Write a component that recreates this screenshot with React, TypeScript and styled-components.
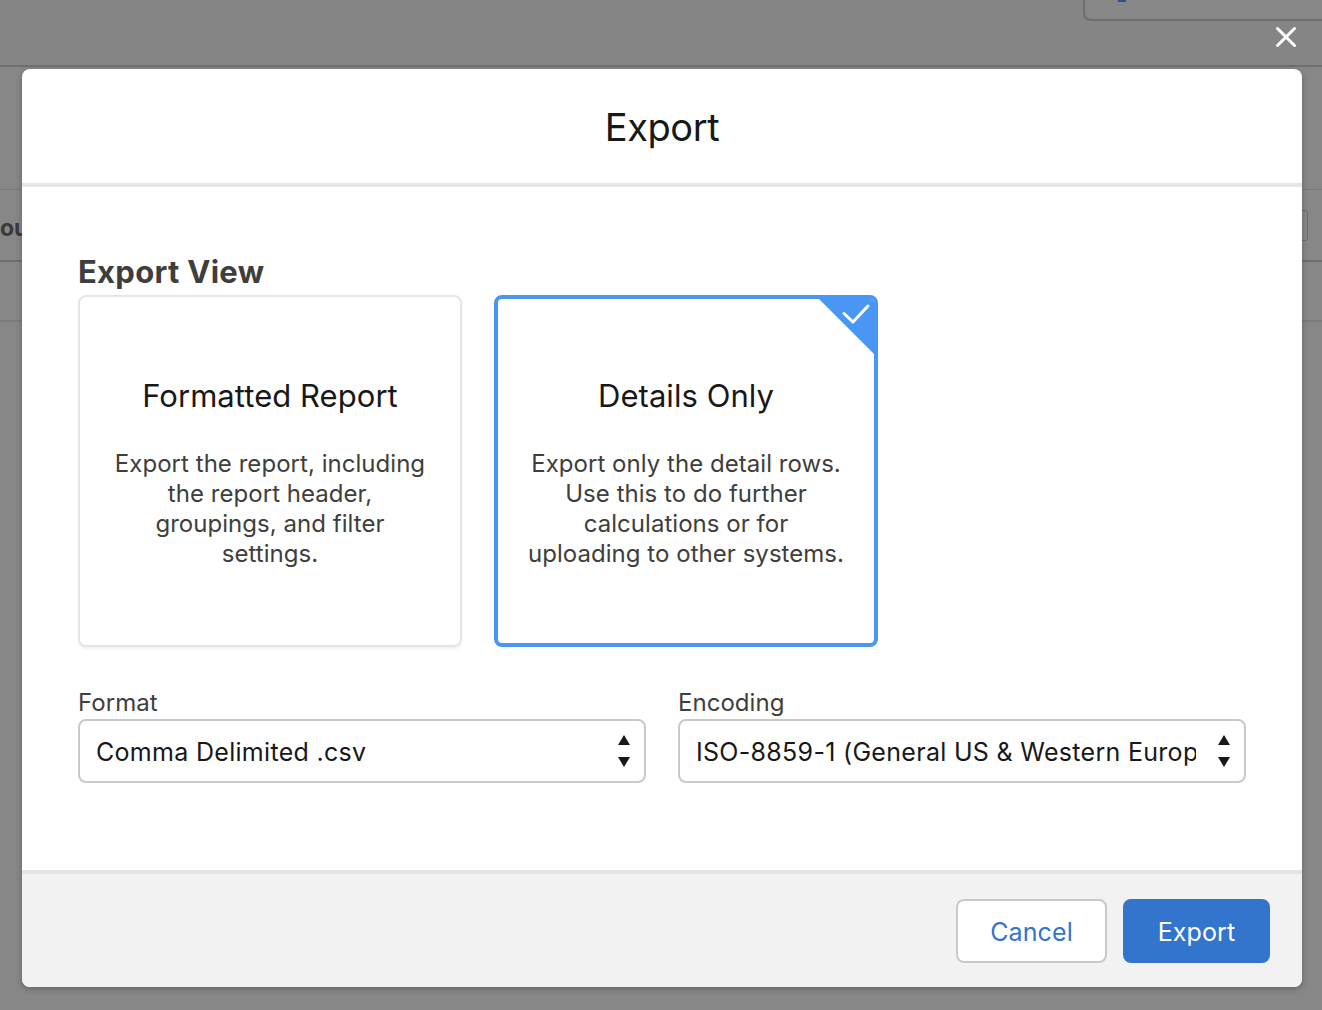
import React from 'react';
import styled, { createGlobalStyle } from 'styled-components';

const GlobalStyle = createGlobalStyle`
  html, body {
    margin: 0;
    padding: 0;
    height: 100%;
    overflow: hidden;
    background: #878787;
    font-family: Inter, "Liberation Sans", sans-serif;
  }
`;

const Page = styled.div`
  position: relative;
  width: 1322px;
  height: 1010px;
  overflow: hidden;
  background: #878787;
`;

const TopBar = styled.div`
  display: flex;
  justify-content: flex-end;
  align-items: flex-start;
  height: 65px;
  background: #858585;
  border-bottom: 2px solid #6f6f6f;
`;

const TopBarBox = styled.div`
  box-sizing: border-box;
  width: 239px;
  height: 21px;
  padding-left: 33px;
  border-left: 2px solid #6e6e6e;
  border-bottom: 2px solid #6e6e6e;
  border-radius: 0 0 0 8px;
  background: #878787;
`;

const TopBarMark = styled.div`
  width: 8px;
  height: 2px;
  background: #2b4f8c;
`;

const ReportHead = styled.div`
  display: flex;
  align-items: center;
  justify-content: space-between;
  height: 70px;
  margin-top: 122px;
  border-top: 1px solid #7b7b7b;
  border-bottom: 2px solid #6c6f78;
  font-size: 23px;
  font-weight: 700;
  color: #3a3a3a;
`;

const ReportHeadText = styled.span`
  padding-top: 5px;
`;

const ReportHeadBox = styled.div`
  box-sizing: border-box;
  width: 40px;
  height: 31px;
  margin-right: 14px;
  border: 1px solid #6e6e6e;
  border-radius: 3px;
`;

const ReportRow = styled.div`
  height: 58px;
  border-bottom: 2px solid #7b7b7b;
`;

const CloseButton = styled.button`
  position: absolute;
  top: 25px;
  right: 24px;
  width: 24px;
  height: 24px;
  padding: 0;
  border: 0;
  background: none;
  color: #ffffff;
  svg { display: block; }
`;

const Modal = styled.div`
  position: absolute;
  top: 69px;
  left: 22px;
  display: flex;
  flex-direction: column;
  width: 1280px;
  height: 918px;
  border-radius: 8px;
  overflow: hidden;
  background: #ffffff;
  box-shadow: 0 2px 6px rgba(0, 0, 0, 0.25);
`;

const ModalHeader = styled.header`
  display: flex;
  align-items: center;
  justify-content: center;
  flex: none;
  height: 112px;
  padding-top: 2px;
  border-bottom: 4px solid #e5e5e5;
`;

const ModalTitle = styled.h1`
  margin: 0;
  font-size: 38px;
  font-weight: 400;
  letter-spacing: -0.4px;
  color: #181818;
`;

const ModalBody = styled.main`
  flex: 1;
  padding: 64px 56px 0;
`;

const SectionTitle = styled.h2`
  margin: 0;
  height: 44px;
  font-size: 31px;
  line-height: 42px;
  font-weight: 700;
  letter-spacing: 0.28px;
  color: #3e3e3c;
`;

const CardRow = styled.div`
  display: flex;
  gap: 32px;
`;

const Card = styled.div<{ $selected?: boolean }>`
  position: relative;
  box-sizing: border-box;
  width: 384px;
  height: 352px;
  padding: ${(p) => (p.$selected ? '77px 28px 0' : '79px 30px 0')};
  border-radius: 8px;
  overflow: hidden;
  text-align: center;
  border: ${(p) => (p.$selected ? '4px solid #4a96f5' : '2px solid #e5e5e5')};
  box-shadow: ${(p) => (p.$selected ? 'none' : '0 2px 3px rgba(0, 0, 0, 0.06)')};
`;

const CardTitle = styled.h3`
  margin: 0;
  font-size: 31px;
  line-height: 40px;
  font-weight: 400;
  letter-spacing: 0.05px;
  color: #181818;
`;

const CardText = styled.p`
  margin: 33px 0 0;
  font-size: 24px;
  line-height: 30px;
  letter-spacing: 0.04px;
  color: #3e3e3c;
`;

const CornerMark = styled.svg`
  position: absolute;
  top: -4px;
  right: -4px;
  display: block;
`;

const FieldRow = styled.div`
  display: grid;
  grid-template-columns: 568px 568px;
  gap: 32px;
  margin-top: 40px;
`;

const Field = styled.label`
  display: flex;
  flex-direction: column;
`;

const FieldLabel = styled.span`
  height: 32px;
  font-size: 24px;
  line-height: 32px;
  letter-spacing: 0.04px;
  color: #3e3e3c;
`;

const SelectWrap = styled.div`
  position: relative;
`;

const Select = styled.select`
  display: block;
  box-sizing: border-box;
  width: 100%;
  height: 64px;
  padding: 2px 48px 0 16px;
  border: 2px solid #c9c9c9;
  border-radius: 8px;
  background: #ffffff;
  appearance: none;
  font-family: inherit;
  font-size: 25px;
  letter-spacing: 0.3px;
  color: #181818;
`;

const SelectArrows = styled.svg`
  position: absolute;
  top: 15px;
  right: 15px;
  display: block;
  pointer-events: none;
`;

const ModalFooter = styled.footer`
  display: flex;
  align-items: center;
  justify-content: flex-end;
  gap: 16px;
  flex: none;
  box-sizing: border-box;
  height: 117px;
  padding: 25px 32px 24px;
  border-top: 4px solid #e5e5e5;
  background: #f2f2f2;
`;

const Button = styled.button<{ $primary?: boolean }>`
  box-sizing: border-box;
  width: ${(p) => (p.$primary ? '147px' : '151px')};
  height: 64px;
  padding: 2px 0 0;
  border-radius: 8px;
  font-family: inherit;
  font-size: 25px;
  letter-spacing: 0.12px;
  border: 2px solid ${(p) => (p.$primary ? '#3374cc' : '#c9c9c9')};
  background: ${(p) => (p.$primary ? '#3374cc' : '#ffffff')};
  color: ${(p) => (p.$primary ? '#ffffff' : '#3374cc')};
`;

const Arrows = () => (
  <SelectArrows width="14" height="34" viewBox="0 0 14 34" fill="#181818">
    <path d="M7 1 13 11H1Z" />
    <path d="M1 23H13L7 33Z" />
  </SelectArrows>
);

export default function App() {
  return (
    <Page>
      <GlobalStyle />
      <TopBar>
        <TopBarBox>
          <TopBarMark />
        </TopBarBox>
      </TopBar>
      <ReportHead>
        <ReportHeadText>ou</ReportHeadText>
        <ReportHeadBox />
      </ReportHead>
      <ReportRow />

      <CloseButton aria-label="Close">
        <svg width="24" height="24" viewBox="0 0 24 24" fill="none" stroke="currentColor" strokeWidth="3" strokeLinecap="round">
          <path d="M3.5 3.5 20.5 20.5M20.5 3.5 3.5 20.5" />
        </svg>
      </CloseButton>

      <Modal>
        <ModalHeader>
          <ModalTitle>Export</ModalTitle>
        </ModalHeader>
        <ModalBody>
          <SectionTitle>Export View</SectionTitle>
          <CardRow>
            <Card>
              <CardTitle>Formatted Report</CardTitle>
              <CardText>Export the report, including the report header, groupings, and filter settings.</CardText>
            </Card>
            <Card $selected>
              <CornerMark width="63" height="63" viewBox="0 0 63 63">
                <path d="M0 0H63V63Z" fill="#4a96f5" />
                <path d="M29 18.5 38 27 53 11" fill="none" stroke="#ffffff" strokeWidth="3" strokeLinecap="round" strokeLinejoin="round" />
              </CornerMark>
              <CardTitle>Details Only</CardTitle>
              <CardText>Export only the detail rows. Use this to do further calculations or for uploading to other systems.</CardText>
            </Card>
          </CardRow>
          <FieldRow>
            <Field>
              <FieldLabel>Format</FieldLabel>
              <SelectWrap>
                <Select defaultValue="csv">
                  <option value="csv">Comma Delimited .csv</option>
                  <option value="xlsx">Excel Format .xlsx</option>
                </Select>
                <Arrows />
              </SelectWrap>
            </Field>
            <Field>
              <FieldLabel>Encoding</FieldLabel>
              <SelectWrap>
                <Select defaultValue="iso">
                  <option value="iso">ISO-8859-1 (General US &amp; Western European)</option>
                  <option value="utf8">Unicode (UTF-8)</option>
                </Select>
                <Arrows />
              </SelectWrap>
            </Field>
          </FieldRow>
        </ModalBody>
        <ModalFooter>
          <Button>Cancel</Button>
          <Button $primary>Export</Button>
        </ModalFooter>
      </Modal>
    </Page>
  );
}
